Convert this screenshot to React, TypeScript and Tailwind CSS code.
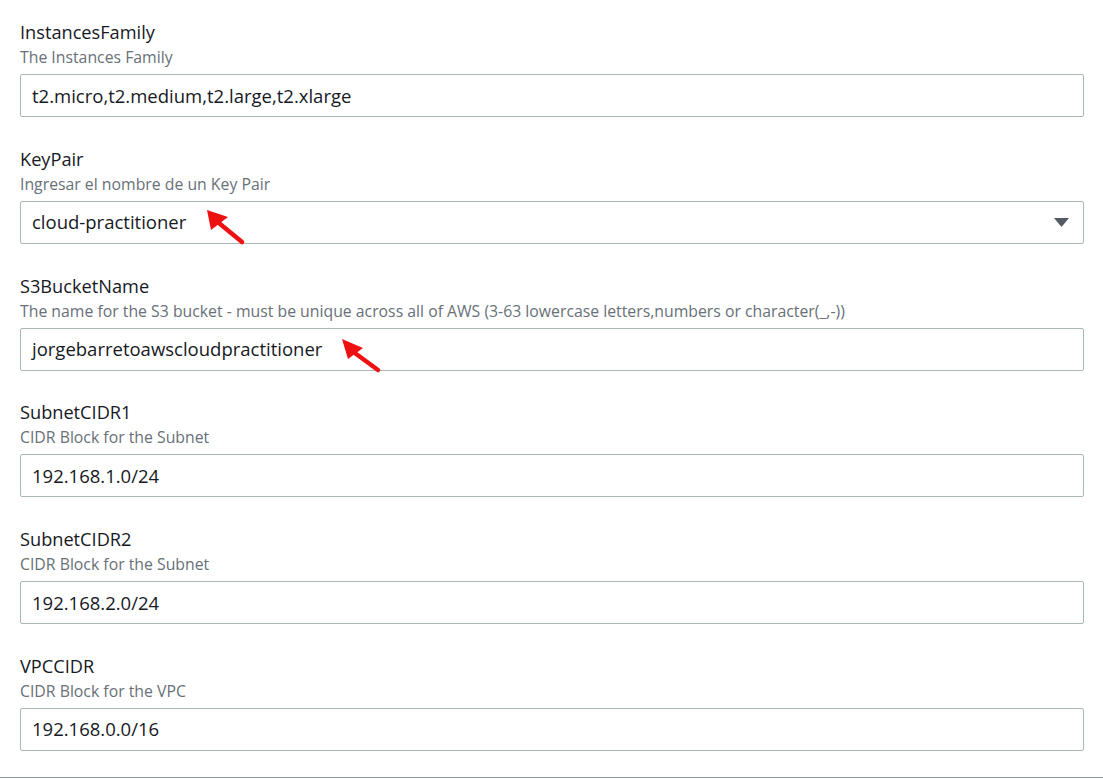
import React from "react";

type Field = { label: string; desc: string; value: string; select?: boolean };

const fields: Field[] = [
  { label: "InstancesFamily", desc: "The Instances Family", value: "t2.micro,t2.medium,t2.large,t2.xlarge" },
  { label: "KeyPair", desc: "Ingresar el nombre de un Key Pair", value: "cloud-practitioner", select: true },
  {
    label: "S3BucketName",
    desc: "The name for the S3 bucket - must be unique across all of AWS (3-63 lowercase letters,numbers or character(_,-))",
    value: "jorgebarretoawscloudpractitioner",
  },
  { label: "SubnetCIDR1", desc: "CIDR Block for the Subnet", value: "192.168.1.0/24" },
  { label: "SubnetCIDR2", desc: "CIDR Block for the Subnet", value: "192.168.2.0/24" },
  { label: "VPCCIDR", desc: "CIDR Block for the VPC", value: "192.168.0.0/16" },
];

function Arrow({ tip, tail, left, right }: { tip: [number, number]; tail: [number, number]; left: [number, number]; right: [number, number] }) {
  const mid: [number, number] = [(left[0] + right[0]) / 2, (left[1] + right[1]) / 2];
  return (
    <>
      <line x1={mid[0]} y1={mid[1]} x2={tail[0]} y2={tail[1]} stroke="#ee1111" strokeWidth={4.5} strokeLinecap="round" />
      <polygon points={`${tip[0]},${tip[1]} ${left[0]},${left[1]} ${right[0]},${right[1]}`} fill="#ee1111" />
    </>
  );
}

export default function App() {
  return (
    <div
      className="relative w-[1103px] h-[779px] bg-white overflow-hidden"
      style={{ fontFamily: '"Open Sans", "Noto Sans", sans-serif' }}
    >
      <div className="flex flex-col pt-[21px] pl-[20px] pr-[19px] pb-[26px] border-b border-[#8d9696]">
        {fields.map((f, i) => (
          <div key={f.label} className={i < fields.length - 1 ? "flex flex-col mb-[30.8px]" : "flex flex-col"}>
            <div className="text-[18.2px] leading-[22px] text-[#16191f]">{f.label}</div>
            <div className="mt-[4px] text-[15.8px] leading-[20px] text-[#687078] whitespace-nowrap">{f.desc}</div>
            <div className="mt-[7px] h-[43px] border border-[#aab7b8] rounded-[2px] flex items-center justify-between pl-[11px] pr-[14px]">
              <span className="text-[18.5px] text-[#16191f] leading-[22px]">{f.value}</span>
              {f.select && (
                <svg width="15" height="9" viewBox="0 0 15 9">
                  <polygon points="0,0 15,0 7.5,9" fill="#545b64" />
                </svg>
              )}
            </div>
          </div>
        ))}
      </div>
      <svg className="absolute left-0 top-0 pointer-events-none" width="1103" height="779">
        <Arrow tip={[207, 210]} tail={[242, 242]} left={[211, 230]} right={[228, 217]} />
        <Arrow tip={[342, 339]} tail={[378, 370]} left={[348, 359]} right={[363, 348]} />
      </svg>
    </div>
  );
}
